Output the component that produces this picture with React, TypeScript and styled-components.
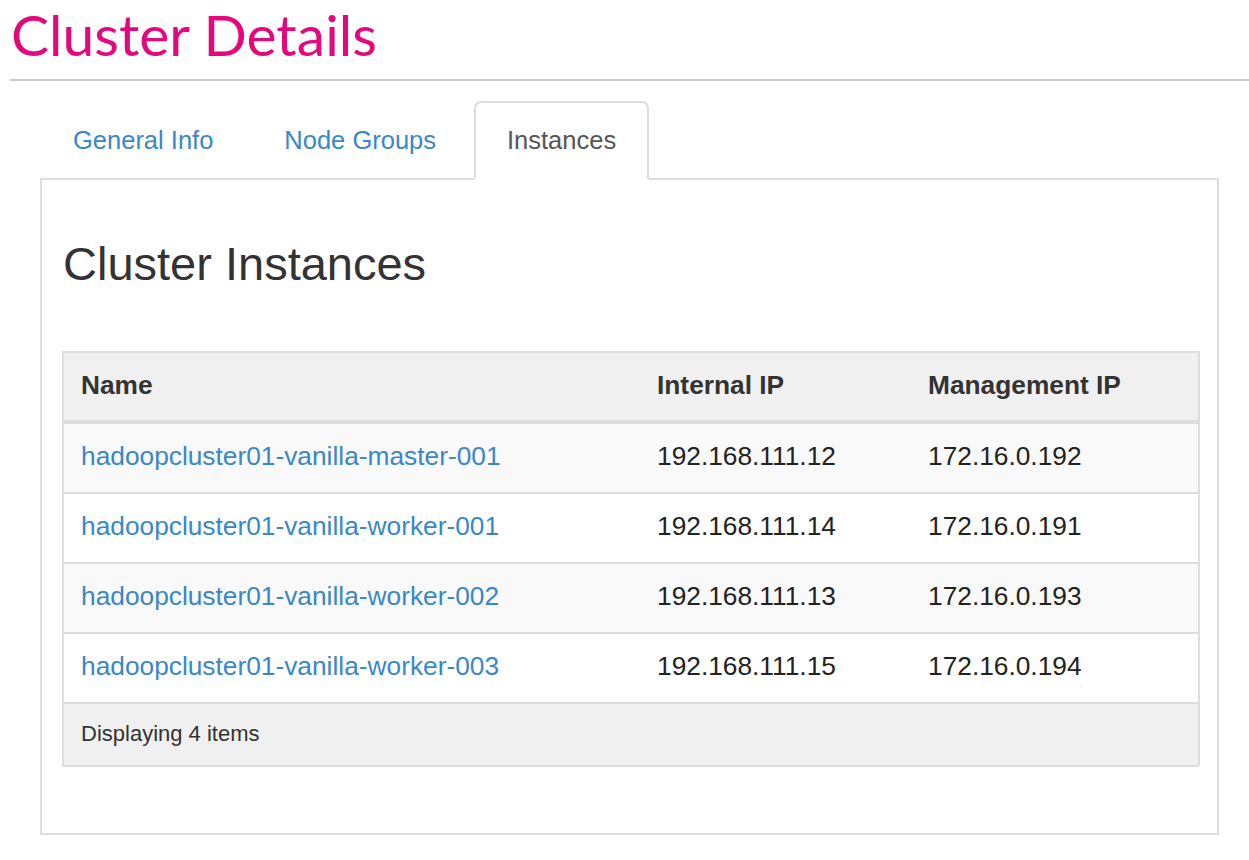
import styled, {createGlobalStyle} from "styled-components";

const GlobalStyle = createGlobalStyle`
  html, body {
    margin: 0;
    padding: 0;
    background: #fff;
  }
  body {
    font-family: "Liberation Sans", Arial, sans-serif;
    color: #333;
  }
`;

type Instance = {
  name: string;
  internalIp: string;
  managementIp: string;
};

const instances: Instance[] = [
  {name: "hadoopcluster01-vanilla-master-001", internalIp: "192.168.111.12", managementIp: "172.16.0.192"},
  {name: "hadoopcluster01-vanilla-worker-001", internalIp: "192.168.111.14", managementIp: "172.16.0.191"},
  {name: "hadoopcluster01-vanilla-worker-002", internalIp: "192.168.111.13", managementIp: "172.16.0.193"},
  {name: "hadoopcluster01-vanilla-worker-003", internalIp: "192.168.111.15", managementIp: "172.16.0.194"},
];

const tabs = ["General Info", "Node Groups", "Instances"];

export default function App() {
  return (
    <Page>
      <GlobalStyle/>
      <PageHeader>
        <Title>Cluster Details</Title>
      </PageHeader>
      <TabArea>
        <Tabs>
          {tabs.map((tab) => (
            <Tab key={tab} $active={tab === "Instances"}>{tab}</Tab>
          ))}
        </Tabs>
        <Panel>
          <Heading>Cluster Instances</Heading>
          <Table>
            <thead>
              <tr>
                <Th $width={576}>Name</Th>
                <Th $width={271}>Internal IP</Th>
                <Th>Management IP</Th>
              </tr>
            </thead>
            <tbody>
              {instances.map((inst, i) => (
                <Row key={inst.name} $striped={i % 2 === 0}>
                  <Td><Link href="#">{inst.name}</Link></Td>
                  <Td>{inst.internalIp}</Td>
                  <Td>{inst.managementIp}</Td>
                </Row>
              ))}
            </tbody>
            <tfoot>
              <tr>
                <Footer colSpan={3}>Displaying 4 items</Footer>
              </tr>
            </tfoot>
          </Table>
        </Panel>
      </TabArea>
    </Page>
  );
}

const Page = styled.div`
  padding: 0 0 20px 10px;
`;

const PageHeader = styled.div`
  border-bottom: 2px solid #ccc;
  height: 81px;
  box-sizing: border-box;
`;

const Title = styled.h1`
  margin: 0;
  padding-left: 1px;
  font-family: Lato, "Liberation Sans", sans-serif;
  font-weight: 400;
  font-size: 57px;
  line-height: 68px;
  color: #e3097d;
`;

const TabArea = styled.div`
  margin: 20px 30px 0 30px;
`;

const Tabs = styled.div`
  display: flex;
  gap: 5px;
  position: relative;
  z-index: 1;
`;

const Tab = styled.a<{$active?: boolean}>`
  display: block;
  height: 79px;
  box-sizing: border-box;
  padding: 0 31px;
  line-height: 75px;
  font-size: 25.5px;
  border: 2px solid ${(p) => (p.$active ? "#ddd" : "transparent")};
  border-bottom: 2px solid ${(p) => (p.$active ? "#fff" : "transparent")};
  border-radius: 7px 7px 0 0;
  background: ${(p) => (p.$active ? "#fff" : "transparent")};
  color: ${(p) => (p.$active ? "#555" : "#3a87c8")};
  margin-bottom: -2px;
  cursor: pointer;
`;

const Panel = styled.div`
  border: 2px solid #ddd;
  padding: 56px 17px 0 20px;
  height: 657px;
  box-sizing: border-box;
`;

const Heading = styled.h3`
  margin: 0 0 59px 1px;
  font-size: 47px;
  font-weight: 500;
  line-height: 56px;
  color: #333;
`;

const Table = styled.table`
  width: 100%;
  border-collapse: separate;
  border-spacing: 0;
  border: 2px solid #ddd;
  border-radius: 0 0 4px 0;
  font-size: 26.3px;
`;

const Th = styled.th<{$width?: number}>`
  width: ${(p) => (p.$width ? `${p.$width}px` : "auto")};
  background: #f0f0f0;
  text-align: left;
  font-weight: bold;
  height: 71px;
  padding: 0 17px 2px;
  border-bottom: 4px solid #ddd;
  box-sizing: border-box;
`;

const Row = styled.tr<{$striped?: boolean}>`
  background: ${(p) => (p.$striped ? "#f9f9f9" : "#fff")};
`;

const Td = styled.td`
  height: 70px;
  padding: 0 17px 3px;
  border-bottom: 2px solid #ddd;
  box-sizing: border-box;
  color: #222;
`;

const Link = styled.a`
  color: #3a87c8;
  text-decoration: none;
`;

const Footer = styled.td`
  background: #f0f0f0;
  height: 61px;
  padding: 0 17px 2px;
  font-size: 22px;
  color: #333;
  box-sizing: border-box;
  border-bottom-right-radius: 3px;
`;
